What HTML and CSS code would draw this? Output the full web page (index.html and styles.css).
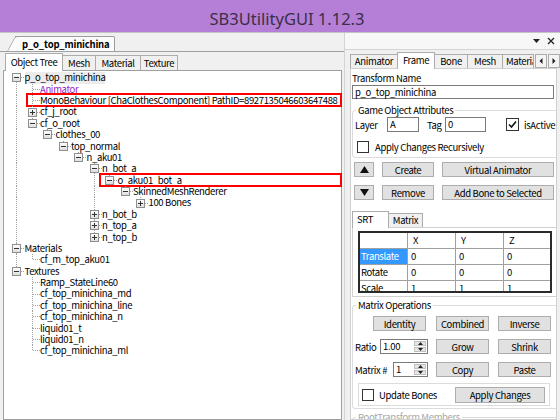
FILE: index.html
```html
<!DOCTYPE html>
<html>
<head>
<meta charset="utf-8">
<title>SB3UtilityGUI</title>
<link rel="stylesheet" href="styles.css">
</head>
<body>
<div class="titlebar">SB3UtilityGUI 1.12.3</div>
<div class="main">
  <div class="left">
    <div class="doctabs"><div class="doctab">p_o_top_minichina</div></div>
    <div class="tabstrip">
      <div class="tab sel w-ot">Object Tree</div>
      <div class="tab w-mesh">Mesh</div>
      <div class="tab w-mat">Material</div>
      <div class="tab w-tex">Texture</div>
    </div>
    <div class="tree">
      <div class="row"><span class="c first n"><i class="pm"></i></span><span class="t hl">p_o_top_minichina</span></div>
      <div class="row"><span class="g v"></span><span class="c n"></span><span class="t anim">Animator</span></div>
      <div class="row"><span class="g v"></span><span class="c n"></span><span class="t">MonoBehaviour [ChaClothesComponent] PathID=8927135046603647488</span><span class="mark m1"></span></div>
      <div class="row"><span class="g v"></span><span class="c n"><i class="pm plus"></i></span><span class="t">cf_j_root</span></div>
      <div class="row"><span class="g v"></span><span class="c"><i class="pm"></i></span><span class="t">cf_o_root</span></div>
      <div class="row"><span class="g v"></span><span class="g"></span><span class="c"><i class="pm"></i></span><span class="t">clothes_00</span></div>
      <div class="row"><span class="g v"></span><span class="g"></span><span class="g"></span><span class="c"><i class="pm"></i></span><span class="t">top_normal</span></div>
      <div class="row"><span class="g v"></span><span class="g"></span><span class="g"></span><span class="g"></span><span class="c"><i class="pm"></i></span><span class="t">n_aku01</span></div>
      <div class="row"><span class="g v"></span><span class="g"></span><span class="g"></span><span class="g"></span><span class="g"></span><span class="c n"><i class="pm"></i></span><span class="t">n_bot_a</span></div>
      <div class="row"><span class="g v"></span><span class="g"></span><span class="g"></span><span class="g"></span><span class="g"></span><span class="g v"></span><span class="c"><i class="pm"></i></span><span class="t">o_aku01_bot_a</span><span class="mark m2"></span></div>
      <div class="row"><span class="g v"></span><span class="g"></span><span class="g"></span><span class="g"></span><span class="g"></span><span class="g v"></span><span class="g"></span><span class="c"><i class="pm"></i></span><span class="t">SkinnedMeshRenderer</span></div>
      <div class="row"><span class="g v"></span><span class="g"></span><span class="g"></span><span class="g"></span><span class="g"></span><span class="g v"></span><span class="g"></span><span class="g"></span><span class="c"><i class="pm plus"></i></span><span class="t">100 Bones</span></div>
      <div class="row"><span class="g v"></span><span class="g"></span><span class="g"></span><span class="g"></span><span class="g"></span><span class="c n"><i class="pm plus"></i></span><span class="t">n_bot_b</span></div>
      <div class="row"><span class="g v"></span><span class="g"></span><span class="g"></span><span class="g"></span><span class="g"></span><span class="c n"><i class="pm plus"></i></span><span class="t">n_top_a</span></div>
      <div class="row"><span class="g v"></span><span class="g"></span><span class="g"></span><span class="g"></span><span class="g"></span><span class="c"><i class="pm plus"></i></span><span class="t">n_top_b</span></div>
      <div class="row"><span class="c n"><i class="pm"></i></span><span class="t">Materials</span></div>
      <div class="row"><span class="g v"></span><span class="c"></span><span class="t">cf_m_top_aku01</span></div>
      <div class="row"><span class="c"><i class="pm"></i></span><span class="t">Textures</span></div>
      <div class="row"><span class="g"></span><span class="c n"></span><span class="t">Ramp_StateLine60</span></div>
      <div class="row"><span class="g"></span><span class="c n"></span><span class="t">cf_top_minichina_md</span></div>
      <div class="row"><span class="g"></span><span class="c n"></span><span class="t">cf_top_minichina_line</span></div>
      <div class="row"><span class="g"></span><span class="c n"></span><span class="t">cf_top_minichina_n</span></div>
      <div class="row"><span class="g"></span><span class="c n"></span><span class="t">liquid01_t</span></div>
      <div class="row"><span class="g"></span><span class="c n"></span><span class="t">liquid01_n</span></div>
      <div class="row"><span class="g"></span><span class="c"></span><span class="t">cf_top_minichina_ml</span></div>
    </div>
  </div>
  <div class="right">
    <div class="rhead">
      <svg class="ico" width="7" height="4" viewBox="0 0 7 4"><polygon points="0,0 7,0 3.5,4" fill="#222"/></svg>
      <svg class="ico" width="8" height="8" viewBox="0 0 8 8"><path d="M1 1L7 7M7 1L1 7" stroke="#222" stroke-width="1.3"/></svg>
    </div>
    <div class="rtabs">
      <div class="tab w-anim">Animator</div>
      <div class="tab sel w-frame">Frame</div>
      <div class="tab w-bone">Bone</div>
      <div class="tab w-rmesh">Mesh</div>
      <div class="tab w-materi">Material</div>
      <div class="tabarrow"><svg width="4" height="6" viewBox="0 0 4 6"><polygon points="3.5,0 3.5,6 0.5,3" fill="#222"/></svg></div>
      <div class="tabarrow"><svg width="4" height="6" viewBox="0 0 4 6"><polygon points="0.5,0 0.5,6 3.5,3" fill="#222"/></svg></div>
    </div>
    <div class="rpage">
      <div class="lbl">Transform Name</div>
      <div class="textbox wide">p_o_top_minichina</div>
      <fieldset class="grp g1">
        <legend>Game Object Attributes</legend>
        <div class="attrrow">
          <span class="l-layer">Layer</span>
          <span class="textbox in-a">A</span>
          <span class="l-tag">Tag</span>
          <span class="textbox in-tag">0</span>
          <span class="chk on"><svg width="11" height="11" viewBox="0 0 11 11"><path d="M2 5.5L4.5 8L9 2.5" fill="none" stroke="#1a1a1a" stroke-width="1.7"/></svg></span>
          <span class="chklbl">isActive</span>
        </div>
        <div class="attrrow2">
          <span class="chk"></span>
          <span class="chklbl2">Apply Changes Recursively</span>
        </div>
      </fieldset>
      <div class="btnrow">
        <button class="btn b-arrow"><svg width="9" height="7" viewBox="0 0 9 7"><polygon points="0,7 4.5,0 9,7" fill="#111"/></svg></button>
        <button class="btn b-create">Create</button>
        <button class="btn b-va">Virtual Animator</button>
      </div>
      <div class="btnrow r2">
        <button class="btn b-arrow"><svg width="9" height="7" viewBox="0 0 9 7"><polygon points="0,0 9,0 4.5,7" fill="#111"/></svg></button>
        <button class="btn b-create">Remove</button>
        <button class="btn b-va">Add Bone to Selected</button>
      </div>
      <div class="subtabs">
        <div class="tab sel w-srt">SRT</div>
        <div class="tab w-matrix">Matrix</div>
      </div>
      <div class="subpage">
        <div class="grid">
          <div class="cell"></div><div class="cell hd">X</div><div class="cell hd">Y</div><div class="cell hd last">Z</div>
          <div class="cell rh selrow">Translate</div><div class="cell">0</div><div class="cell">0</div><div class="cell last">0</div>
          <div class="cell rh">Rotate</div><div class="cell">0</div><div class="cell">0</div><div class="cell last">0</div>
          <div class="cell rh">Scale</div><div class="cell">1</div><div class="cell">1</div><div class="cell last">1</div>
        </div>
      </div>
      <fieldset class="grp g2">
        <legend>Matrix Operations</legend>
        <div class="ops">
          <div class="opcell"><button class="btn b-op b-ident">Identity</button></div>
          <div class="opcell"><button class="btn b-op">Combined</button></div>
          <div class="opcell"><button class="btn b-op">Inverse</button></div>
          <div class="opcell numrow">
            <span>Ratio</span>
            <span class="num w-ratio"><span class="val">1.00</span><span class="spin"><span class="sp"><svg width="5" height="3" viewBox="0 0 5 3"><polygon points="0,3 2.5,0 5,3" fill="#222"/></svg></span><span class="sp"><svg width="5" height="3" viewBox="0 0 5 3"><polygon points="0,0 5,0 2.5,3" fill="#222"/></svg></span></span></span>
          </div>
          <div class="opcell"><button class="btn b-op">Grow</button></div>
          <div class="opcell"><button class="btn b-op">Shrink</button></div>
          <div class="opcell numrow">
            <span>Matrix #</span>
            <span class="num w-mnum"><span class="val">1</span><span class="spin"><span class="sp"><svg width="5" height="3" viewBox="0 0 5 3"><polygon points="0,3 2.5,0 5,3" fill="#222"/></svg></span><span class="sp"><svg width="5" height="3" viewBox="0 0 5 3"><polygon points="0,0 5,0 2.5,3" fill="#222"/></svg></span></span></span>
          </div>
          <div class="opcell"><button class="btn b-op">Copy</button></div>
          <div class="opcell"><button class="btn b-op">Paste</button></div>
        </div>
        <div class="applybox">
          <span class="chk"></span>
          <span class="chklbl">Update Bones</span>
          <button class="btn b-apply">Apply Changes</button>
        </div>
      </fieldset>
      <fieldset class="grp g3">
        <legend>RootTransform Members</legend>
      </fieldset>
    </div>
  </div>
</div>
</body>
</html>
```
FILE: styles.css
```css
* { box-sizing: border-box; }
html, body { margin: 0; padding: 0; }
body {
  width: 560px; height: 420px; overflow: hidden;
  background: #f0f0f0;
  font-family: "Noto Sans CJK JP", "Noto Sans", sans-serif;
  font-size: 9.5px; letter-spacing: -0.35px; color: #000;
}
.titlebar {
  height: 32px; background: #b57fd8; color: #3a2f45;
  font-family: "Noto Sans", "Open Sans", sans-serif; font-size: 16.5px; letter-spacing: normal;
  text-align: center; padding-top: 6px; padding-left: 14px; line-height: 26px;
}
.main { display: flex; height: 388px; border-top: 1px solid #c4c4c4; }

/* left document */
.left { width: 345px; flex: none; border-right: 1px solid #d4d4d4; display: flex; flex-direction: column; }
.doctabs { height: 19px; flex: none; border-bottom: 1px solid #a0a0a0; display: flex; align-items: flex-end; padding-left: 15px; }
.doctab {
  position: relative; z-index: 0; height: 15px; line-height: 14px;
  padding: 0 5px 0 7px; background: #fbfbfb;
  border-top: 1px solid #9d9d9d; border-right: 1px solid #9d9d9d; border-top-right-radius: 2px;
  font-weight: bold; letter-spacing: -0.2px;
}
.doctab::before {
  content: ""; position: absolute; z-index: -1; left: -8px; top: -1px; bottom: 0; width: 16px;
  background: #fbfbfb; border-left: 1px solid #9d9d9d; border-top: 1px solid #9d9d9d;
  border-top-left-radius: 3px; transform: skewX(-28deg); transform-origin: 0 100%;
}
.tabstrip { height: 18px; flex: none; display: flex; align-items: flex-end; padding-left: 6px; }
.tab {
  height: 15px; border: 1px solid #acacac; border-bottom: none; background: #f0f0f0;
  text-align: center; line-height: 14px; white-space: nowrap; flex: none; margin-left: -1px;
}
.tab.sel { position: relative; z-index: 1; height: 18px; margin-bottom: -1px; background: #fff; line-height: 16px; }
.w-ot { width: 58px; }
.w-mesh { width: 34px; }
.w-mat { width: 46px; }
.w-tex { width: 38px; }

.tree {
  flex: 1; margin-left: 3px; width: 339px; background: #fff;
  border: 1px solid #a0a0a0; padding: 1.3px 0 0 5px; position: relative;
}
.row { display: flex; height: 11.375px; white-space: nowrap; position: relative; }
.g, .c { flex: none; width: 15.5px; }
.v { background: repeating-linear-gradient(to bottom, #a0a0a0 0 1px, transparent 1px 2px) 7px 0 / 1px 100% no-repeat; }
.c {
  display: flex; align-items: center;
  background:
    repeating-linear-gradient(to right, #a0a0a0 0 1px, transparent 1px 2px) 8px 50% / 7.5px 1px no-repeat,
    repeating-linear-gradient(to bottom, #a0a0a0 0 1px, transparent 1px 2px) 7px 0 / 1px 50% no-repeat;
}
.c.n {
  background:
    repeating-linear-gradient(to right, #a0a0a0 0 1px, transparent 1px 2px) 8px 50% / 7.5px 1px no-repeat,
    repeating-linear-gradient(to bottom, #a0a0a0 0 1px, transparent 1px 2px) 7px 0 / 1px 50% no-repeat,
    repeating-linear-gradient(to bottom, #a0a0a0 0 1px, transparent 1px 2px) 7px 100% / 1px 50% no-repeat;
}
.c.first.n {
  background:
    repeating-linear-gradient(to right, #a0a0a0 0 1px, transparent 1px 2px) 8px 50% / 7.5px 1px no-repeat,
    repeating-linear-gradient(to bottom, #a0a0a0 0 1px, transparent 1px 2px) 7px 100% / 1px 50% no-repeat;
}
.pm {
  display: block; width: 9px; height: 9px; margin-left: 3px; border: 1px solid #8e8f8f;
  background:
    linear-gradient(#333, #333) center / 5px 1px no-repeat,
    linear-gradient(#fdfdfd, #dedede);
}
.pm.plus {
  background:
    linear-gradient(#333, #333) center / 5px 1px no-repeat,
    linear-gradient(#333, #333) center / 1px 5px no-repeat,
    linear-gradient(#fdfdfd, #dedede);
}
.t { line-height: 11.375px; }
.t.hl { background: #ececec; }
.t.anim { color: #9326c4; }
.mark { position: absolute; border: 2px solid #f00; right: -1px; }
.mark.m1 { left: 17px; top: -2px; height: 14px; }
.mark.m2 { left: 90px; top: -1.5px; height: 13.5px; }

/* right panel */
.right { flex: 1; display: flex; flex-direction: column; min-width: 0; }
.rhead {
  height: 17px; flex: none; border-bottom: 1px solid #d4d4d4; background: #f7f7f7;
  display: flex; align-items: center; justify-content: flex-end; gap: 7px; padding-right: 5px;
}
.ico { display: block; }
.rtabs { height: 18px; flex: none; display: flex; align-items: flex-end; padding-left: 6px; }
.rtabs .tab { height: 14px; line-height: 13px; }
.rtabs .tab.sel { height: 17px; line-height: 15px; }
.w-anim { width: 48px; }
.w-frame { width: 38px; }
.w-bone { width: 34px; }
.w-rmesh { width: 36px; }
.w-materi { width: 32px; overflow: hidden; text-align: left; padding-left: 3px; }
.tabarrow {
  width: 12px; height: 14px; margin-left: 1px; flex: none; border: 1px solid #acacac;
  background: #f4f4f4; display: flex; align-items: center; justify-content: center;
}
.tabarrow svg { display: block; }
.rpage {
  flex: 1; margin-left: 5px; width: 207px; border: 1px solid #d0d0d0; background: #fff; overflow: hidden;
}
.lbl { margin: 3px 0 0 1px; line-height: 12px; }
.textbox { display: block; border: 1px solid #7a7a7a; background: #fff; line-height: 12px; padding-left: 2px; white-space: nowrap; }
.textbox.wide { margin: 1px 0 0 1px; width: 202px; height: 14px; }

.grp { margin: 5px -4px 0 1px; padding: 1px 0 4px 2px; border: 1px solid #dcdcdc; border-radius: 3px; min-width: 0; }
.grp legend { padding: 0 2px; margin-left: 1px; line-height: 12px; }
.attrrow { display: flex; align-items: center; height: 15px; }
.l-layer { width: 32px; flex: none; }
.in-a { width: 32px; height: 15px; line-height: 13px; flex: none; }
.l-tag { width: 18px; margin-left: 8px; flex: none; }
.in-tag { width: 41px; height: 15px; line-height: 13px; flex: none; }
.chk {
  width: 12px; height: 12px; flex: none; border: 1px solid #333; background: #fff;
  display: flex; align-items: center; justify-content: center;
}
.chk svg { display: block; }
.chk.on { width: 13px; height: 13px; margin-left: 20px; }
.chklbl { margin-left: 5px; }
.attrrow2 { display: flex; align-items: center; height: 13px; margin-top: 8px; }
.attrrow2 .chk { margin-left: 2px; }
.chklbl2 { margin-left: 6px; }

.btnrow { display: flex; gap: 8px; margin: 4px 0 0 3px; height: 15px; }
.btnrow.r2 { margin-top: 8px; }
.btn {
  font: inherit; letter-spacing: inherit; color: #000; margin: 0; padding: 0; height: 15px;
  background: #e1e1e1; border: 1px solid #adadad; border-radius: 0;
  display: flex; align-items: center; justify-content: center; white-space: nowrap; flex: none;
}
.btn svg { display: block; }
.b-arrow { width: 20px; }
.b-create { width: 52px; }
.b-va { width: 112px; }

.subtabs { height: 16px; display: flex; align-items: flex-end; padding-left: 2px; margin-top: 11px; }
.subtabs .tab { height: 14px; line-height: 13px; }
.subtabs .tab.sel { height: 17px; line-height: 15px; text-align: left; padding-left: 4px; }
.w-srt { width: 37px; }
.w-matrix { width: 35px; }
.subpage {
  margin: 0 -4px 0 1px; height: 70px; border: 1px solid #d0d0d0; background: #fff; padding: 3px 0 0 5px;
}
.grid {
  width: 194px; height: 62px; overflow: hidden; border: 2px solid #2a2a2a;
  display: grid; grid-template-columns: 48px 48px 48px 46px; grid-auto-rows: 16px; background: #fff;
}
.cell { border-right: 1px solid #a0a0a0; border-bottom: 1px solid #a0a0a0; line-height: 15px; padding-left: 3px; white-space: nowrap; }
.cell.last { border-right: none; }
.cell.hd { padding-left: 5px; }
.cell.rh { padding-left: 1px; }
.cell.selrow { background: #3399ff; color: #fff; }

.g2 { margin-top: 2px; padding: 5px 0 2px 2px; }
.ops { display: grid; grid-template-columns: 81px 62px 53px; grid-auto-rows: 15px; row-gap: 8px; }
.opcell { display: flex; }
.b-op { width: 53px; }
.b-ident { margin-left: 18px; }
.numrow { width: 73px; justify-content: space-between; align-items: center; }
.num { display: flex; height: 15px; border: 1px solid #7a7a7a; background: #fff; }
.w-ratio { width: 48px; }
.w-mnum { width: 35px; }
.num .val { flex: 1; padding-left: 2px; line-height: 13px; }
.spin { width: 13px; display: flex; flex-direction: column; padding: 1px 1px 1px 0; gap: 1px; }
.sp { flex: 1; background: #e6e6e6; border: 1px solid #c0c0c0; display: flex; align-items: center; justify-content: center; }
.sp svg { display: block; }
.applybox {
  display: flex; align-items: center; margin: 6px 0 0 3px; width: 192px; height: 23px;
  border: 1px solid #dcdcdc; padding: 0 4px 0 3px;
}
.b-apply { width: 90px; height: 16px; margin-left: auto; }
.g3 { margin-top: 2px; }
.g3 legend { color: #a8a8a8; }
```
